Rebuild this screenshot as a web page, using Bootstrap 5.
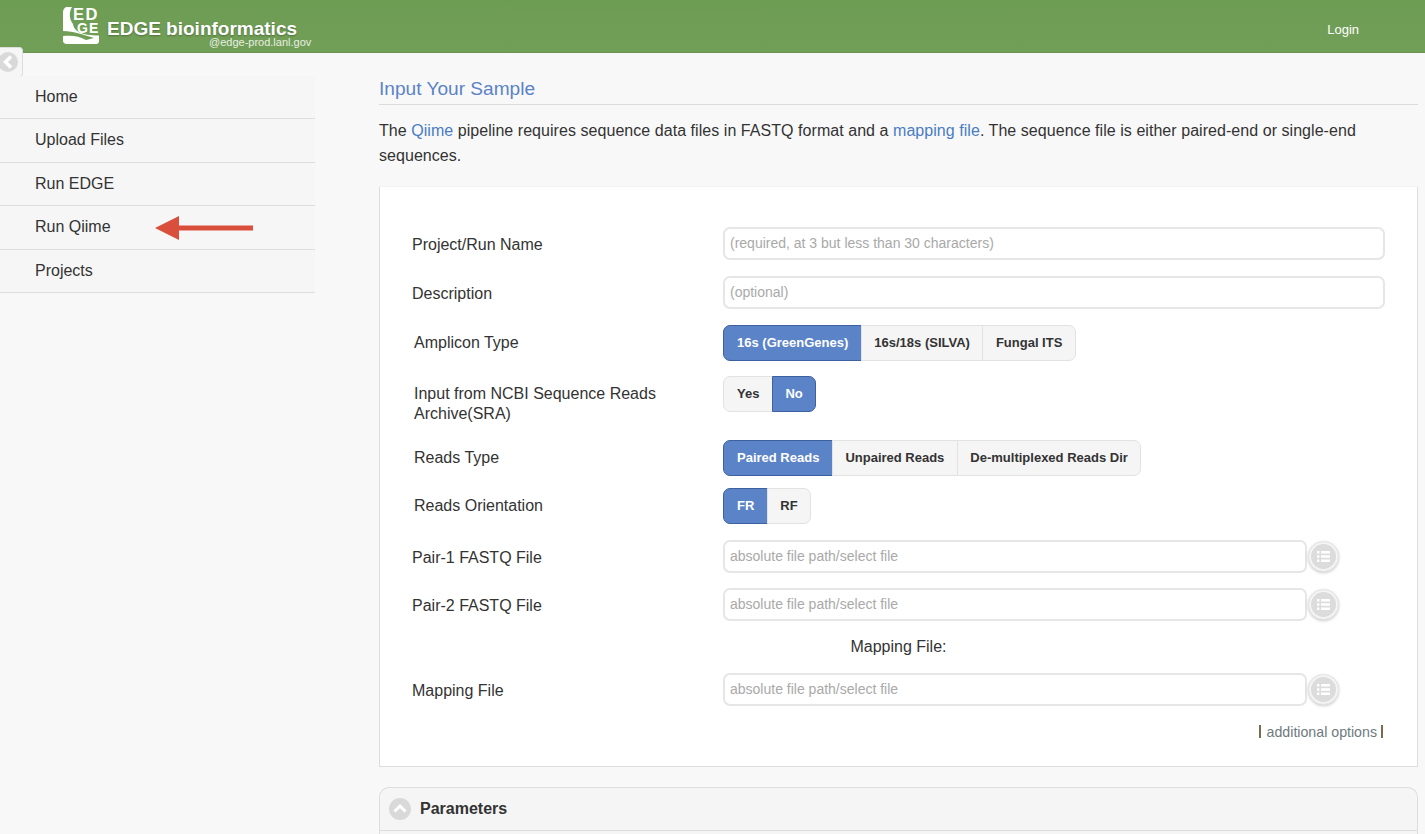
<!DOCTYPE html>
<html lang="en">
<head>
  <meta charset="UTF-8">
  <title>EDGE bioinformatics</title>
  <link href="https://cdn.jsdelivr.net/npm/bootstrap@5.3.0/dist/css/bootstrap.min.css" rel="stylesheet">
  <style>
    html, body { height: 834px; overflow: hidden; }
    body { font-family: "Liberation Sans", Arial, sans-serif; font-size: 16px; color: #333; background: #f8f8f8; }

    .top-bar { height: 53px; background: linear-gradient(#6d9c53, #729f58); border-bottom: 1px solid #6a9450; padding-left: 62px; padding-right: 66px; }
    .brand-wrap { position: relative; width: 250px; height: 53px; }
    .brand-logo { position: absolute; left: 1px; top: 4px; }
    .logo-big { font-family: "Liberation Sans", Arial, sans-serif; font-size: 16.5px; font-weight: 700; fill: #fff; }
    .logo-small { font-family: "Liberation Sans", Arial, sans-serif; font-size: 14px; font-weight: 700; fill: #fff; }
    .brand-name { position: absolute; left: 45px; top: 17px; font-size: 19px; font-weight: 700; color: #fff; line-height: 24px; white-space: nowrap; text-shadow: 0 1px 2px rgba(0,0,0,.3); }
    .brand-host { position: absolute; left: 147px; top: 35px; font-size: 11px; color: #e8efe3; line-height: 14px; white-space: nowrap; }
    .login-link { color: #fff; font-size: 13px; text-decoration: none; padding-top: 8px; }

    .side-toggle { position: absolute; left: 0; top: 47px; width: 23px; height: 30px; background: #f6f6f6; border: 1px solid #ddd; border-left: 0; border-radius: 0 4px 4px 0; display: flex; align-items: center; }

    .side-col { width: 315px; flex: none; padding-top: 22.5px; }
    .side-link { display: block; height: 43.5px; line-height: 42px; padding-left: 35px; background: #f6f6f6; color: #333; text-decoration: none; border-bottom: 1px solid #dedede; position: relative; }
    .side-arrow { position: absolute; left: 155px; top: 9px; }

    .main-col { width: 1039px; margin-left: 64px; flex: none; padding-top: 22px; }
    .page-title { font-size: 19.1px; font-weight: 400; line-height: 26px; color: #5b83c6; margin: 0; padding: 1px 0 2px; border-bottom: 1px solid #dcdcdc; }
    .page-text { line-height: 25px; margin: 13px 0 18px; letter-spacing: .05px; }
    .page-text a { color: #4a7cc4; text-decoration: none; }

    .form-box { height: 581px; background: #fff; border: 1px solid #ddd; border-top-color: #f4f4f4; padding: 40px 32px 0 32px; }
    .form-line { display: flex; }
    .line-label { width: 311px; flex: none; line-height: 20px; color: #333; padding-top: 2px; }
    .indent-label { padding-left: 2px; padding-top: 0; }
    .line-input { height: 33px; border: 2px solid #e6e6e6; border-radius: 7px; font-size: 14px; padding: 0 5px 1px; box-shadow: none; }
    .line-input::placeholder { color: #a9a9a9; }
    .pick-btn { width: 31px; height: 31px; border-radius: 50%; background: #f4f4f4; border: 1px solid #e4e4e4; box-shadow: 0 1px 3px rgba(0,0,0,.2); margin-left: 1px; flex: none; display: flex; align-items: center; justify-content: center; }
    .pick-row { width: 584px; flex: none; }

    .opt-btn { font-size: 13px; font-weight: 700; color: #333; background: #f5f5f5; border: 1px solid #e2e2e2; padding: 0 12.5px; height: 36px; line-height: 34px; }
    .opt-btn.is-on { background: #5b83c8; border-color: #3d609f; color: #fff; }
    .opt-btn:first-child { border-radius: 7px 0 0 7px; padding-left: 13px; }
    .opt-btn:last-child { border-radius: 0 7px 7px 0; }

    .gap-12 { margin-bottom: 12px; }
    .gap-15 { margin-bottom: 15px; }
    .map-title { line-height: 20px; margin-top: 16px; margin-bottom: 16px; }

    .more-line { margin-top: 15px; margin-right: 2px; line-height: 21px; }
    .more-link { color: #6f7a7e; font-size: 14.2px; text-decoration: none; }
    .more-bar { display: inline-block; width: 2px; height: 13px; background: #7d6a4a; vertical-align: -1px; }
    .bar-left { margin-right: 6px; }
    .bar-right { margin-left: 4px; }

    .param-box { height: 60px; margin-top: 20px; background: #f5f5f5; border: 1px solid #ddd; border-bottom: 0; border-radius: 10px 10px 0 0; }
    .param-head { height: 43px; border-bottom: 1px solid #ddd; padding-left: 9px; gap: 9px; font-weight: 700; color: #333; }
  </style>
</head>
<body class="position-relative">
  <header class="top-bar d-flex justify-content-between align-items-center">
    <div class="brand-wrap">
      <svg class="brand-logo" width="36" height="40" viewBox="0 -3 36 40">
        <path fill="#fff" d="M4 0h5C6 5 6 12 10 17C11 24 18 28.500 36 28.500V34c0 2-1 3-3 3H4c-2 0-4-1-4-3v-5c8-1 17 0 23 4 3-1 5-1 8-2-10-3-20-7-31-7V5C0 2 2 0 4 0z"/>
        <text class="logo-big" x="10" y="13">E</text>
        <text class="logo-big" x="22.500" y="13">D</text>
        <text class="logo-small" x="14" y="26">G</text>
        <text class="logo-small" x="26" y="26">E</text>
      </svg>
      <span class="brand-name">EDGE bioinformatics</span>
      <span class="brand-host">@edge-prod.lanl.gov</span>
    </div>
    <a class="login-link" href="#">Login</a>
  </header>

  <a class="side-toggle" href="#" aria-label="Collapse">
    <svg width="20" height="20" viewBox="0 0 20 20"><circle cx="8" cy="10" r="10" fill="#d9d9d9"/><path d="M11 4.500L5.500 10l5.500 5.500" fill="none" stroke="#fff" stroke-width="3.500"/></svg>
  </a>

  <div class="d-flex">
    <nav class="side-col">
      <a class="side-link" href="#">Home</a>
      <a class="side-link" href="#">Upload Files</a>
      <a class="side-link" href="#">Run EDGE</a>
      <a class="side-link" href="#">Run Qiime
        <svg class="side-arrow" width="99" height="26" viewBox="0 0 99 26"><path fill="#d94f3b" d="M0 13L24 1v9.500h74v5H24V25z"/></svg>
      </a>
      <a class="side-link" href="#">Projects</a>
    </nav>

    <main class="main-col">
      <h1 class="page-title">Input Your Sample</h1>
      <p class="page-text">The <a href="#">Qiime</a> pipeline requires sequence data files in FASTQ format and a <a href="#">mapping file</a>. The sequence file is either paired-end or single-end sequences.</p>

      <form class="form-box">
        <div class="form-line align-items-center mb-3">
          <label class="line-label">Project/Run Name</label>
          <input class="form-control line-input" type="text" placeholder="(required, at 3 but less than 30 characters)">
        </div>
        <div class="form-line align-items-center mb-3">
          <label class="line-label">Description</label>
          <input class="form-control line-input" type="text" placeholder="(optional)">
        </div>
        <div class="form-line align-items-center gap-15">
          <label class="line-label indent-label">Amplicon Type</label>
          <div class="btn-group">
            <button type="button" class="btn opt-btn is-on">16s (GreenGenes)</button>
            <button type="button" class="btn opt-btn">16s/18s (SILVA)</button>
            <button type="button" class="btn opt-btn">Fungal ITS</button>
          </div>
        </div>
        <div class="form-line align-items-start mb-3">
          <label class="line-label indent-label pe-5 pt-2">Input from NCBI Sequence Reads Archive(SRA)</label>
          <div class="btn-group">
            <button type="button" class="btn opt-btn">Yes</button>
            <button type="button" class="btn opt-btn is-on">No</button>
          </div>
        </div>
        <div class="form-line align-items-center gap-12">
          <label class="line-label indent-label">Reads Type</label>
          <div class="btn-group">
            <button type="button" class="btn opt-btn is-on">Paired Reads</button>
            <button type="button" class="btn opt-btn">Unpaired Reads</button>
            <button type="button" class="btn opt-btn">De-multiplexed Reads Dir</button>
          </div>
        </div>
        <div class="form-line align-items-center mb-3">
          <label class="line-label indent-label">Reads Orientation</label>
          <div class="btn-group">
            <button type="button" class="btn opt-btn is-on">FR</button>
            <button type="button" class="btn opt-btn">RF</button>
          </div>
        </div>
        <div class="form-line align-items-center gap-15">
          <label class="line-label">Pair-1 FASTQ File</label>
          <div class="pick-row"><input class="form-control line-input" type="text" placeholder="absolute file path/select file"></div>
          <span class="pick-btn"><svg width="25" height="25" viewBox="0 0 25 25"><circle cx="12.5" cy="12.5" r="12.5" fill="#dcdcdc"/><path fill="#fff" d="M10 7h9v2.400h-9zM10 11.300h9v2.400h-9zM10 15.600h9v2.400h-9zM6 7h2.400v2.400H6zM6 11.300h2.400v2.400H6zM6 15.600h2.400v2.400H6z"/></svg></span>
        </div>
        <div class="form-line align-items-center">
          <label class="line-label">Pair-2 FASTQ File</label>
          <div class="pick-row"><input class="form-control line-input" type="text" placeholder="absolute file path/select file"></div>
          <span class="pick-btn"><svg width="25" height="25" viewBox="0 0 25 25"><circle cx="12.5" cy="12.5" r="12.5" fill="#dcdcdc"/><path fill="#fff" d="M10 7h9v2.400h-9zM10 11.300h9v2.400h-9zM10 15.600h9v2.400h-9zM6 7h2.400v2.400H6zM6 11.300h2.400v2.400H6zM6 15.600h2.400v2.400H6z"/></svg></span>
        </div>
        <div class="map-title text-center">Mapping File:</div>
        <div class="form-line align-items-center">
          <label class="line-label">Mapping File</label>
          <div class="pick-row"><input class="form-control line-input" type="text" placeholder="absolute file path/select file"></div>
          <span class="pick-btn"><svg width="25" height="25" viewBox="0 0 25 25"><circle cx="12.5" cy="12.5" r="12.5" fill="#dcdcdc"/><path fill="#fff" d="M10 7h9v2.400h-9zM10 11.300h9v2.400h-9zM10 15.600h9v2.400h-9zM6 7h2.400v2.400H6zM6 11.300h2.400v2.400H6zM6 15.600h2.400v2.400H6z"/></svg></span>
        </div>
        <div class="more-line text-end"><span class="more-bar bar-left"></span><a class="more-link" href="#">additional options</a><span class="more-bar bar-right"></span></div>
      </form>

      <section class="param-box">
        <div class="param-head d-flex align-items-center">
          <svg width="22" height="22" viewBox="0 0 22 22"><circle cx="11" cy="11" r="11" fill="#d9d9d9"/><path d="M5.500 13.500L11 8l5.500 5.500" fill="none" stroke="#fff" stroke-width="3"/></svg>
          <span>Parameters</span>
        </div>
      </section>
    </main>
  </div>

  <script src="https://cdn.jsdelivr.net/npm/bootstrap@5.3.0/dist/js/bootstrap.bundle.min.js"></script>
</body>
</html>
